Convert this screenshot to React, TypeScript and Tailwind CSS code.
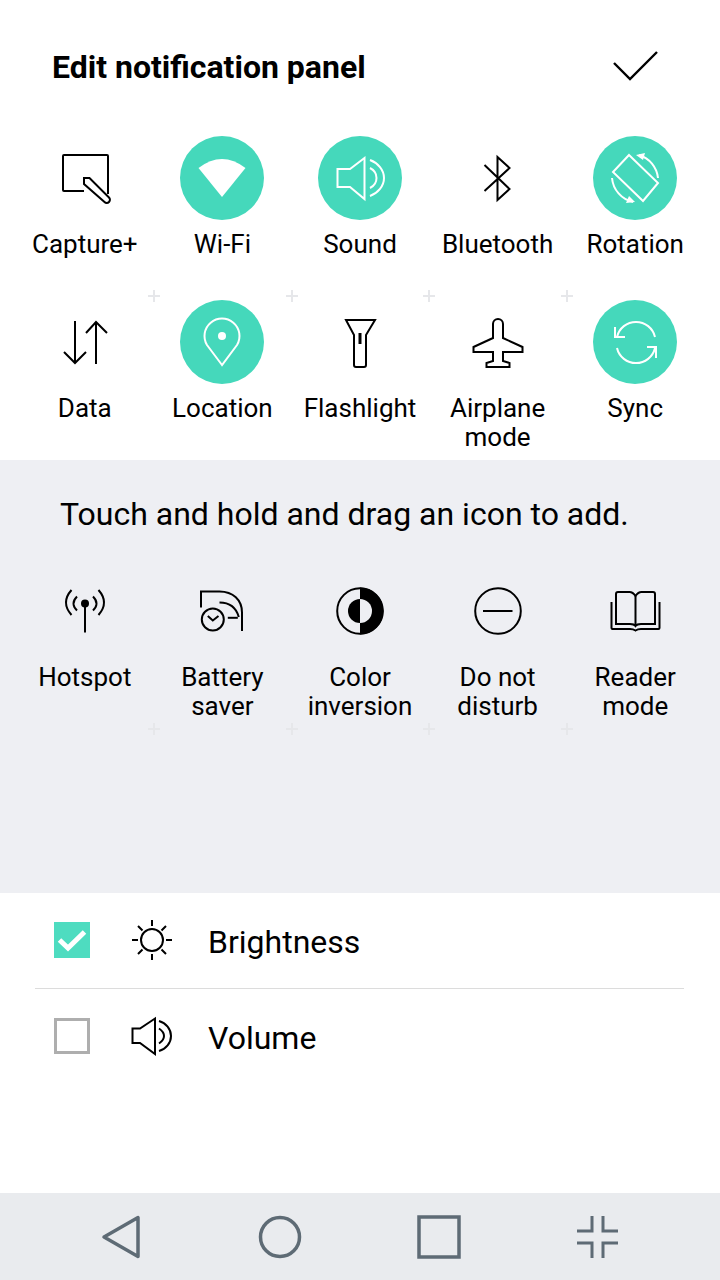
import type { ReactNode } from "react";

const ink = "#000";

function Svg({ children, color = ink, sw = 2, dy = 0 }: { children: ReactNode; color?: string; sw?: number; dy?: number }) {
  return (
    <svg width="60" height="60" viewBox="0 0 60 60" fill="none" stroke={color} strokeWidth={sw}>
      <g transform={`translate(0 ${dy})`}>{children}</g>
    </svg>
  );
}

const CaptureIcon = () => (
  <Svg>
    <path d="M29 43H9a1 1 0 0 1-1-1V8a1 1 0 0 1 1-1h43a1 1 0 0 1 1 1v38" />
    <path d="M29 30h5.500L54 49.500a3 3 0 0 1-4.500 4.500L29 36z" fill="#fff" />
  </Svg>
);
const WifiIcon = () => (
  <svg width="60" height="60" viewBox="0 0 60 60"><path d="M6.500 20Q30 2 53.500 20L30 49z" fill="#fff" /></svg>
);
const SoundIcon = () => (
  <Svg color="#fff">
    <path d="M7.500 21H20L34.500 10v41L20 39H7.500z" />
    <path d="M40 20c4 2 6.500 6 6.500 10s-2.500 8-6.500 10" />
    <path d="M40 12c8 3 14 10 14 18s-6 15-14 18" />
  </Svg>
);
const BluetoothIcon = () => (
  <Svg>
    <path d="M16.500 17L41.500 41 29.500 52V9L41.500 20 16.500 43" />
  </Svg>
);
const RotationIcon = () => (
  <Svg color="#fff">
    <path d="M24 7L53 35 38 53 8 24z" />
    <path d="M34 7A27 27 0 0 1 53 30" />
    <path d="M31 7l9-2-2 7z" fill="#fff" stroke="none" />
    <path d="M7 30A27 27 0 0 0 28 54" />
    <path d="M30 54l-9 1 3-7z" fill="#fff" stroke="none" />
  </Svg>
);
const DataIcon = () => (
  <Svg dy={1}>
    <path d="M20 8v41M9 39l11 11 11-11" />
    <path d="M41 51V9M31 20L41 9l11 11" />
  </Svg>
);
const LocationIcon = () => (
  <Svg color="#fff" dy={1}>
    <path d="M30 52L15 32a17.500 17.500 0 1 1 30 0z" />
    <circle cx="30" cy="23" r="4" fill="#fff" stroke="none" />
  </Svg>
);
const FlashlightIcon = () => (
  <Svg dy={2}>
    <path d="M16 6h29l-9 15v30a2 2 0 0 1-2 2h-8a2 2 0 0 1-2-2V21z" />
    <path d="M30 19v11" strokeWidth="3" />
  </Svg>
);
const AirplaneIcon = () => (
  <Svg dy={2}>
    <path d="M25 24V10a5 5 0 0 1 10 0v14l19.500 9v5H35v9l6.500 2v4h-23v-4l6.500-2V38H5.500v-5z" />
  </Svg>
);
const SyncIcon = () => (
  <Svg color="#fff" dy={1}>
    <path d="M50 24A19.500 19.500 0 0 0 12 24" />
    <path d="M12 35A19.500 19.500 0 0 0 50 35" />
    <path d="M10 14v10h10" />
    <path d="M51 45V34H42" />
  </Svg>
);
const HotspotIcon = () => (
  <Svg>
    <circle cx="30" cy="22.500" r="4" fill={ink} stroke="none" />
    <path d="M30 26v25.500" />
    <path d="M22 15.500Q15 22.500 22 29.500M38 15.500Q45 22.500 38 29.500" />
    <path d="M16.500 9Q5.500 21.500 16.500 34M43.500 9Q54.500 21.500 43.500 34" />
  </Svg>
);
const BatteryIcon = () => (
  <Svg>
    <path d="M9 26.500V10.500H27.500C41 10.500 50 19 50 31.500V50" />
    <path d="M27.500 21.500C37 21.500 44 26 46.800 36" />
    <circle cx="20.800" cy="38.500" r="11" />
    <path d="M15.800 35l5 4.500 5.700-4.500" />
    <path d="M35.800 36.800h10" />
  </Svg>
);
const InversionIcon = () => (
  <Svg>
    <circle cx="30" cy="30" r="22.800" />
    <path d="M30 6.500a23.500 23.500 0 0 1 0 47z" fill={ink} stroke="none" />
    <path d="M30 18a12 12 0 0 0 0 24z" fill={ink} stroke="none" />
    <path d="M30 18a12 12 0 0 1 0 24z" fill="#eeeff3" stroke="none" />
  </Svg>
);
const DndIcon = () => (
  <Svg>
    <circle cx="30" cy="30" r="22.800" />
    <path d="M15 30h29.500" />
  </Svg>
);
const ReaderIcon = () => (
  <Svg>
    <path d="M30.500 15c-2-3-4-4-6-4H13a2 2 0 0 0-2 2v30h14c2.500 0 4.500.5 5.500 2 1-1.500 3-2 5.500-2h14V13a2 2 0 0 0-2-2H36.500c-2 0-4 1-6 4z" />
    <path d="M30.500 15v30" />
    <path d="M6.500 21v26a1 1 0 0 0 1 1H25c2 0 4 .5 5.500 1.500 1.500-1 3.500-1.500 5.500-1.500h17.500a1 1 0 0 0 1-1V21" />
  </Svg>
);

type Tile = { label: string[]; icon: ReactNode; on?: boolean };

const TOP: Tile[] = [
  { label: ["Capture+"], icon: <CaptureIcon /> },
  { label: ["Wi-Fi"], icon: <WifiIcon />, on: true },
  { label: ["Sound"], icon: <SoundIcon />, on: true },
  { label: ["Bluetooth"], icon: <BluetoothIcon /> },
  { label: ["Rotation"], icon: <RotationIcon />, on: true },
  { label: ["Data"], icon: <DataIcon /> },
  { label: ["Location"], icon: <LocationIcon />, on: true },
  { label: ["Flashlight"], icon: <FlashlightIcon /> },
  { label: ["Airplane", "mode"], icon: <AirplaneIcon /> },
  { label: ["Sync"], icon: <SyncIcon />, on: true },
];

const EXTRA: Tile[] = [
  { label: ["Hotspot"], icon: <HotspotIcon /> },
  { label: ["Battery", "saver"], icon: <BatteryIcon /> },
  { label: ["Color", "inversion"], icon: <InversionIcon /> },
  { label: ["Do not", "disturb"], icon: <DndIcon /> },
  { label: ["Reader", "mode"], icon: <ReaderIcon /> },
];

function TileCell({ tile }: { tile: Tile }) {
  return (
    <div className="flex flex-col items-center">
      <div className={`flex h-[84px] w-[84px] items-center justify-center rounded-full ${tile.on ? "bg-[#45d8bb]" : ""}`}>
        {tile.icon}
      </div>
      <div className="mt-[10px] text-center text-[26px] leading-[29px] whitespace-nowrap text-black">
        {tile.label.map(l => <div key={l}>{l}</div>)}
      </div>
    </div>
  );
}

function Plus() {
  return (
    <span className="relative block h-[12px] w-[12px]">
      <span className="absolute left-0 top-[5px] h-[2px] w-[12px] bg-[#e6e7ea]" />
      <span className="absolute left-[5px] top-0 h-[12px] w-[2px] bg-[#e6e7ea]" />
    </span>
  );
}

function PlusRow({ top }: { top: number }) {
  return (
    <div className="absolute left-[148px] flex gap-[125.500px]" style={{ top }}>
      <Plus /><Plus /><Plus /><Plus />
    </div>
  );
}

export default function App() {
  return (
    <div className="relative flex h-[1280px] w-[720px] flex-col overflow-hidden bg-white font-['Roboto',sans-serif]">
      <header className="flex h-[136px] shrink-0 items-start justify-between pl-[52px] pr-[59px] pt-[46px]">
        <h1 className="text-[32px] leading-[42px] font-bold text-black">Edit notification panel</h1>
        <svg width="48" height="36" viewBox="0 0 48 36" fill="none" stroke="#000" strokeWidth="2.400" className="mt-[2px]">
          <path d="M1 15L17 31 44 4" />
        </svg>
      </header>

      <section className="grid h-[324px] shrink-0 grid-cols-5 content-start gap-y-[41px] px-4">
        {TOP.map(t => <TileCell key={t.label[0]} tile={t} />)}
      </section>

      <section className="h-[433px] shrink-0 bg-[#eeeff3]">
        <p className="pl-[60px] pt-[34px] text-[32px] leading-[40px] text-black">Touch and hold and drag an icon to add.</p>
        <div className="mt-[35px] grid grid-cols-5 px-4">
          {EXTRA.map(t => <TileCell key={t.label[0]} tile={t} />)}
        </div>
      </section>

      <section className="flex-1 pl-[35px] pr-[36px]">
        <div className="flex h-[96px] items-center border-b border-[#dcdcdc] pb-[1px] pl-[19px]">
          <span className="flex h-9 w-9 items-center justify-center bg-[#4edcc0]">
            <svg width="30" height="26" viewBox="0 0 30 26" fill="none" stroke="#fff" strokeWidth="5"><path d="M2.500 13L11 21 27.500 5" /></svg>
          </span>
          <svg width="42" height="42" viewBox="0 0 42 42" fill="none" stroke="#000" strokeWidth="2" className="ml-[41px]">
            <circle cx="21" cy="21" r="11" />
            <path d="M21 1v6M21 35v6M1 21h6M35 21h6M7 7l4.500 4.500M30.500 30.500L35 35M7 35l4.500-4.500M30.500 11.500L35 7" />
          </svg>
          <span className="ml-[35px] mt-[3px] text-[32px] text-black">Brightness</span>
        </div>
        <div className="flex h-[94px] items-center pl-[19px]">
          <span className="h-9 w-9 border-[3px] border-[#aeaeae]" />
          <svg width="42" height="42" viewBox="0 0 42 42" fill="none" stroke="#000" strokeWidth="2" className="ml-[41px]">
            <path d="M1.500 13.500H9L24 3.500V39L9 28H1.500z" />
            <path d="M28 13.500c3 2 5 4.500 5 7.500s-2 5.500-5 7.500" />
            <path d="M28 6c7 2 12 8 12 15s-5 13-12 15" />
          </svg>
          <span className="ml-[35px] mt-[4px] text-[32px] text-black">Volume</span>
        </div>
      </section>

      <nav className="flex h-[87px] shrink-0 items-center bg-[#e9ebee] pl-[101px]">
        <svg width="40" height="44" viewBox="0 0 40 44" fill="none" stroke="#5e6b75" strokeWidth="3.500" strokeLinejoin="round"><path d="M37 2.500V41.500L3 22z" /></svg>
        <svg width="44" height="44" viewBox="0 0 44 44" fill="none" stroke="#5e6b75" strokeWidth="3.500" className="ml-[117px]"><circle cx="22" cy="22" r="19.500" /></svg>
        <svg width="44" height="44" viewBox="0 0 44 44" fill="none" stroke="#5e6b75" strokeWidth="3.500" className="ml-[115px]"><rect x="2" y="2" width="40" height="40" /></svg>
        <svg width="44" height="44" viewBox="0 0 44 44" fill="none" stroke="#5e6b75" strokeWidth="3" className="ml-[115px]">
          <path d="M16 1v15H1M27 1v15h15M1 28h15v15M42 28H27v15" />
        </svg>
      </nav>

      <div className="absolute left-0 top-0"><PlusRow top={290} /><PlusRow top={723} /></div>
    </div>
  );
}
